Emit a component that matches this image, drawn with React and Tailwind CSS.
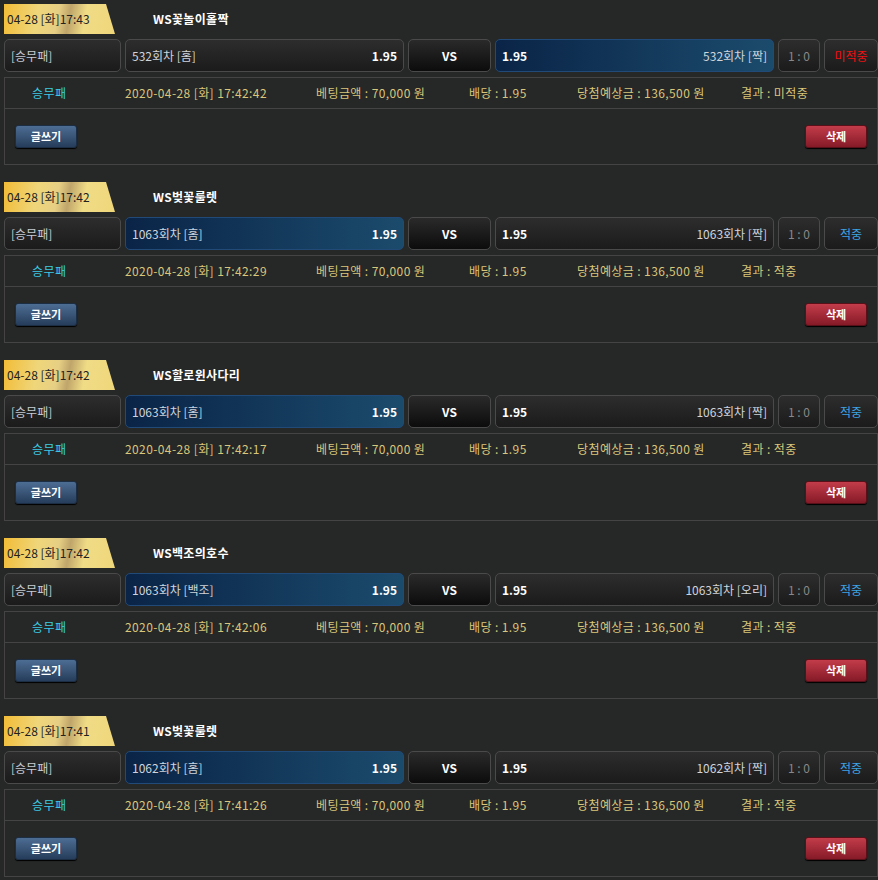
const ROWS = [
  { time: '04-28 [화]17:43', title: 'WS꽃놀이홀짝', home: '532회차 [홈]', away: '532회차 [짝]', pick: 'away', result: '미적중', stamp: '2020-04-28 [화] 17:42:42' },
  { time: '04-28 [화]17:42', title: 'WS벚꽃룰렛', home: '1063회차 [홈]', away: '1063회차 [짝]', pick: 'home', result: '적중', stamp: '2020-04-28 [화] 17:42:29' },
  { time: '04-28 [화]17:42', title: 'WS할로윈사다리', home: '1063회차 [홈]', away: '1063회차 [짝]', pick: 'home', result: '적중', stamp: '2020-04-28 [화] 17:42:17' },
  { time: '04-28 [화]17:42', title: 'WS백조의호수', home: '1063회차 [백조]', away: '1063회차 [오리]', pick: 'home', result: '적중', stamp: '2020-04-28 [화] 17:42:06' },
  { time: '04-28 [화]17:41', title: 'WS벚꽃룰렛', home: '1062회차 [홈]', away: '1062회차 [짝]', pick: 'home', result: '적중', stamp: '2020-04-28 [화] 17:41:26' },
];

const box = 'h-[33px] rounded-[5px] border flex items-center';
const plain = 'border-[#4a4a4a] bg-[linear-gradient(180deg,#2d2d2d,#1b1b1b)]';
const picked = 'border-[#224a78] bg-[linear-gradient(90deg,#0a2447,#1b4b6c)]';

function BetCard({ row }) {
  const missed = row.result === '미적중';
  return (
    <div className="mb-[17px]">
      <div className="flex items-center h-[30px]">
        <div className="w-[111px] h-[30px] flex items-center pl-[3px] text-[12px] text-[#222] bg-[linear-gradient(100deg,#f2bc36_0%,#efd67a_30%,#e6cf84_48%,#bfa56a_58%,#f0dc86_72%,#efd67a_100%)] [clip-path:polygon(0_0,102px_0,111px_100%,0_100%)]">
          {row.time}
        </div>
        <div className="ml-[38px] text-[12px] font-bold text-white tracking-[0.3px]">{row.title}</div>
      </div>

      <div className="flex mt-[5px] gap-[4px] text-[12px]">
        <div className={`${box} ${plain} w-[117px] px-[6px] text-[#c6ccd4]`}>[승무패]</div>
        <div className={`${box} ${row.pick === 'home' ? picked : plain} w-[279px] px-[6px] justify-between`}>
          <span className="text-[#d0d4da]">{row.home}</span>
          <span className="font-bold text-white">1.95</span>
        </div>
        <div className={`${box} w-[83px] justify-center border-[#4a4a4a] bg-[linear-gradient(180deg,#2a2a2a,#0c0c0c)] font-bold text-white`}>VS</div>
        <div className={`${box} ${row.pick === 'away' ? picked : plain} w-[279px] px-[6px] justify-between`}>
          <span className="font-bold text-white">1.95</span>
          <span className="text-[#d0d4da]">{row.away}</span>
        </div>
        <div className={`${box} ${plain} w-[42px] justify-center text-[#888]`}>1 : 0</div>
        <div className={`${box} ${plain} flex-1 justify-center ${missed ? 'text-[#ee1111]' : 'text-[#3ca3e6]'}`}>{row.result}</div>
      </div>

      <div className="mt-[5px] border border-[#444] h-[88px]">
        <div className="h-[31px] flex items-center pl-[27px] text-[12px] tracking-[0.4px] text-[#d9c67a] border-b border-[#444]">
          <span className="w-[93px] text-[#3ccbe6]">승무패</span>
          <span className="w-[191px]">{row.stamp}</span>
          <span className="w-[153px]">베팅금액 : 70,000 원</span>
          <span className="w-[108px]">배당 : 1.95</span>
          <span className="w-[164px]">당첨예상금 : 136,500 원</span>
          <span>결과 : {row.result}</span>
        </div>
        <div className="flex justify-between items-center h-[55px] pl-[10px] pr-[10px]">
          <button className="w-[62px] h-[23px] rounded-[3px] text-[11px] font-bold text-white border border-[#1c2e44] bg-[linear-gradient(180deg,#4d6d93,#263d5b)] shadow-[0_1px_1px_#000]">글쓰기</button>
          <button className="w-[62px] h-[23px] rounded-[3px] text-[11px] font-bold text-white border border-[#5a1018] bg-[linear-gradient(180deg,#c33c4a,#861a27)] shadow-[0_1px_1px_#000]">삭제</button>
        </div>
      </div>
    </div>
  );
}

export default function App() {
  return (
    <div className="w-[878px] h-[880px] overflow-hidden bg-[#262727] pt-[4px] pl-[4px] font-['Noto_Sans_CJK_KR','Noto_Sans',sans-serif]">
      {ROWS.map((row, i) => (
        <BetCard key={i} row={row} />
      ))}
    </div>
  );
}
